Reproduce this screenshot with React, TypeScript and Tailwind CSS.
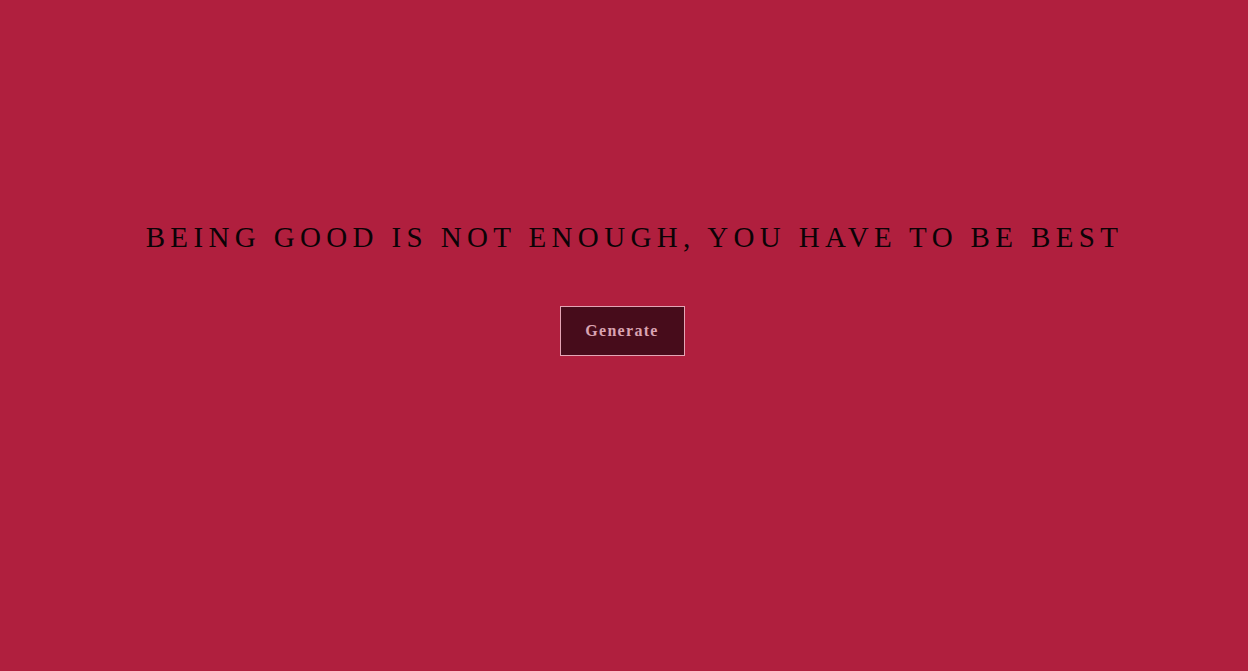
export default function App() {
	return (
		<div className="min-h-[671px] w-full bg-[#b01f3e] flex flex-col items-center pt-[218px]" style={{ fontFamily: '"Liberation Serif", serif' }}>
			<h1 className="pl-[21px] text-[29px] leading-[38px] tracking-[0.185em] text-[#0b0306] font-normal uppercase">
				Being good is not enough, you have to be best
			</h1>
			<button className="mt-[50px] mr-[4px] w-[125px] h-[50px] bg-[#470c1b] border border-[#e4a5b5] text-[#d9a3b2] text-[16px] font-bold tracking-[0.08em]">
				Generate
			</button>
		</div>
	);
}
